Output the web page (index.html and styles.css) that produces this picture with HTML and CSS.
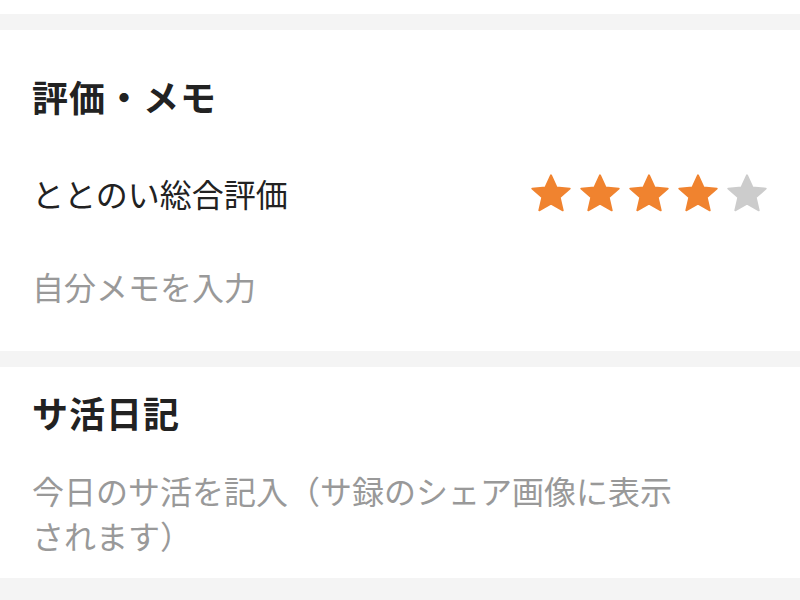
FILE: index.html
```html
<!DOCTYPE html>
<html lang="ja">
<head>
<meta charset="utf-8">
<link rel="stylesheet" href="styles.css">
</head>
<body>
<div class="page">
  <div class="tail"></div>
  <div class="sep sep-top"></div>
  <section class="card card-rating">
    <h2 class="title">評価・メモ</h2>
    <div class="row">
      <span class="label">ととのい総合評価</span>
      <div class="stars">
        <svg class="star on" viewBox="2 2 20 19"><path d="M12 2.6 14.8 8.7 21.4 9.3 16.4 13.7 17.9 20.2 12 16.8 6.1 20.2 7.6 13.7 2.6 9.3 9.2 8.7Z"/></svg>
        <svg class="star on" viewBox="2 2 20 19"><path d="M12 2.6 14.8 8.7 21.4 9.3 16.4 13.7 17.9 20.2 12 16.8 6.1 20.2 7.6 13.7 2.6 9.3 9.2 8.7Z"/></svg>
        <svg class="star on" viewBox="2 2 20 19"><path d="M12 2.6 14.8 8.7 21.4 9.3 16.4 13.7 17.9 20.2 12 16.8 6.1 20.2 7.6 13.7 2.6 9.3 9.2 8.7Z"/></svg>
        <svg class="star on" viewBox="2 2 20 19"><path d="M12 2.6 14.8 8.7 21.4 9.3 16.4 13.7 17.9 20.2 12 16.8 6.1 20.2 7.6 13.7 2.6 9.3 9.2 8.7Z"/></svg>
        <svg class="star off" viewBox="2 2 20 19"><path d="M12 2.6 14.8 8.7 21.4 9.3 16.4 13.7 17.9 20.2 12 16.8 6.1 20.2 7.6 13.7 2.6 9.3 9.2 8.7Z"/></svg>
      </div>
    </div>
    <p class="placeholder memo">自分メモを入力</p>
  </section>
  <div class="sep"></div>
  <section class="card card-diary">
    <h2 class="title">サ活日記</h2>
    <p class="placeholder diary">今日のサ活を記入（サ録のシェア画像に表示されます）</p>
  </section>
  <div class="sep sep-bottom"></div>
</div>
</body>
</html>
```

FILE: styles.css
```css
* { box-sizing: border-box; }
html, body {
  margin: 0;
  padding: 0;
  background: #f4f4f4;
}
body {
  font-family: "Noto Sans CJK JP", "Noto Sans", sans-serif;
  color: #222;
}
.page {
  display: flex;
  flex-direction: column;
  width: 800px;
  height: 600px;
  overflow: hidden;
}
.tail {
  height: 14px;
  background: #fff;
}
.sep {
  height: 16px;
  background: #f4f4f4;
}
.sep-bottom {
  flex: 1;
}
.card {
  background: #fff;
  padding: 0 33px 0 32px;
  display: flex;
  flex-direction: column;
}
.card-rating {
  height: 321px;
  padding-top: 41px;
}
.card-diary {
  height: 211px;
  padding-top: 20px;
}
.title {
  margin: 0;
  font-size: 36px;
  font-weight: 700;
  line-height: 50px;
  letter-spacing: 1px;
  color: #222;
}
.row {
  margin-top: 42px;
  height: 60px;
  display: flex;
  align-items: center;
  justify-content: space-between;
}
.label {
  font-size: 32px;
  line-height: 60px;
  color: #222;
}
.stars {
  display: flex;
  gap: 9px;
}
.star {
  width: 40px;
  height: 38px;
  overflow: visible;
}
.star path {
  stroke-width: 0.9;
  stroke-linejoin: round;
}
.star.on path { fill: #f0832f; stroke: #f0832f; }
.star.off path { fill: #cccccc; stroke: #cccccc; }
.placeholder {
  margin: 0;
  font-size: 32px;
  color: #999;
}
.memo {
  margin-top: 39px;
  line-height: 48px;
}
.diary {
  margin-top: 31px;
  line-height: 45px;
  max-width: 660px;
}
```
